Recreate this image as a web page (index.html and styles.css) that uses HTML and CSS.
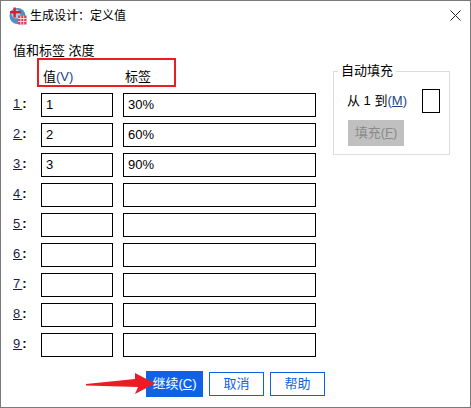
FILE: index.html
```html
<!DOCTYPE html>
<html>
<head>
  <meta name="viewport" content="width=device-width, initial-scale=1.0">
  <title>生成设计：定义值</title>
  <link rel="stylesheet" href="styles.css">
</head>

<body>
  <div class="dialog">
    <div class="titlebar">
      <svg class="app-icon" width="18" height="18" viewBox="0 0 18 18">
        <circle cx="8.500" cy="9" r="8" fill="#4f8fc4"/>
        <circle cx="7" cy="7" r="4.500" fill="#a9cbe6"/>
        <rect x="1" y="4" width="11" height="2.400" fill="#d3202c"/>
        <rect x="4.400" y="0.500" width="2.400" height="10" fill="#d3202c"/>
        <rect x="9" y="8.500" width="8.500" height="9" fill="#d8405a"/>
        <path d="M9 11.500h8.500M9 14.500h8.500M11.800 8.500v9M14.700 8.500v9" stroke="#f6d5da" stroke-width="1"/>
      </svg>
      <span class="title">生成设计：定义值</span>
      <svg class="close" width="11" height="11" viewBox="0 0 11 11">
        <path d="M0.500 0.500l10 10M10.500 0.500l-10 10" stroke="#222" stroke-width="1" fill="none"/>
      </svg>
    </div>

    <div class="content">
      <div class="values">
        <div class="caption">值和标签 浓度</div>
        <div class="head-row">
          <span class="head-value">值<span class="key">(V)</span></span>
          <span>标签</span>
        </div>
        <div class="row"><span class="num"><u>1</u>:</span><div class="field short">1</div><div class="field long">30%</div></div>
        <div class="row"><span class="num"><u>2</u>:</span><div class="field short">2</div><div class="field long">60%</div></div>
        <div class="row"><span class="num"><u>3</u>:</span><div class="field short">3</div><div class="field long">90%</div></div>
        <div class="row"><span class="num"><u>4</u>:</span><div class="field short"></div><div class="field long"></div></div>
        <div class="row"><span class="num"><u>5</u>:</span><div class="field short"></div><div class="field long"></div></div>
        <div class="row"><span class="num"><u>6</u>:</span><div class="field short"></div><div class="field long"></div></div>
        <div class="row"><span class="num"><u>7</u>:</span><div class="field short"></div><div class="field long"></div></div>
        <div class="row"><span class="num"><u>8</u>:</span><div class="field short"></div><div class="field long"></div></div>
        <div class="row"><span class="num"><u>9</u>:</span><div class="field short"></div><div class="field long"></div></div>
      </div>

      <fieldset class="autofill">
        <legend>自动填充</legend>
        <div class="from-row">
          <span>从 1 到<span class="key">(<u>M</u>)</span></span>
          <div class="field tiny"></div>
        </div>
        <div class="fill-button">填充(<u>F</u>)</div>
      </fieldset>
    </div>

    <div class="buttons">
      <div class="btn primary">继续(<u>C</u>)</div>
      <div class="btn">取消</div>
      <div class="btn">帮助</div>
    </div>

    <!-- annotations on top of the screenshot -->
    <div class="mark-box"></div>
    <svg class="mark-arrow" width="69" height="21" viewBox="0 0 69 21">
      <path d="M0 11 L49 6 L49 0 L69 10.500 L49 21 L52 14 L0 12.500 Z" fill="#ec1c24"/>
    </svg>
  </div>
</body>
</html>
```

FILE: styles.css
```css
html, body {
  margin: 0;
  padding: 0;
}

body {
  font-family: "Liberation Sans", "Noto Sans CJK SC", sans-serif;
  font-size: 13px;
  line-height: 16px;
  color: #000;
  background-color: #fff;
}

.dialog {
  position: relative;
  width: 471px;
  height: 408px;
  box-sizing: border-box;
  border: 1px solid #7a7a7a;
  background-color: #fff;
  overflow: hidden;
}

.titlebar {
  display: flex;
  align-items: center;
  height: 29px;
  padding: 0 9px 0 8px;
  margin-bottom: 13px;
}

.app-icon {
  margin-right: 3px;
}

.title {
  flex: 1;
  font-size: 12px;
}

.content {
  display: flex;
  padding-left: 12px;
}

.values {
  width: 320px;
}

.caption {
  height: 16px;
}

.head-row {
  display: flex;
  height: 26px;
  box-sizing: border-box;
  padding: 10px 0 0 30px;
  margin-bottom: 8px;
}

.head-value {
  width: 82px;
}

.key {
  color: #1a4488;
}

.row {
  display: flex;
  align-items: center;
  height: 24px;
  margin-bottom: 6px;
}

.num {
  width: 28px;
  padding-bottom: 2px;
  font-weight: 700;
  letter-spacing: 2px;
}

.num u {
  color: #1c1c50;
  font-weight: 400;
}

.field {
  box-sizing: border-box;
  height: 24px;
  border: 1px solid #000;
  padding: 3px 4px;
  background-color: #fff;
}

.field.short {
  width: 72px;
  margin-right: 10px;
}

.field.long {
  width: 193px;
}

.field.tiny {
  width: 18px;
}

.autofill {
  box-sizing: border-box;
  width: 117px;
  height: 92px;
  margin: 20px 0 0 0;
  padding: 0 9px 0 14px;
  border: 1px solid #dcdcdc;
}

.autofill legend {
  padding: 0 3px;
  margin-left: -10px;
}

.from-row {
  display: flex;
  align-items: center;
  justify-content: space-between;
  margin: 10px 0 0 -1px;
}

.fill-button {
  width: 56px;
  height: 26px;
  margin-top: 7px;
  line-height: 26px;
  text-align: center;
  color: #8a8a8a;
  background-color: #c0c0c0;
}

.buttons {
  display: flex;
  align-items: center;
  gap: 5px;
  padding-left: 145px;
  margin-top: 8px;
}

.btn {
  box-sizing: border-box;
  width: 55px;
  height: 24px;
  line-height: 22px;
  text-align: center;
  color: #0f62e6;
  border: 1px solid #0f62e6;
  background-color: #fff;
}

.btn + .btn {
  margin-left: 1px;
}

.btn.primary {
  width: 57px;
  height: 26px;
  line-height: 26px;
  color: #fff;
  border: none;
  background-color: #0f62e6;
}

.mark-box {
  position: absolute;
  left: 36px;
  top: 57px;
  width: 139px;
  height: 29px;
  box-sizing: border-box;
  border: 2px solid #ec1c24;
}

.mark-arrow {
  position: absolute;
  left: 85px;
  top: 372px;
}
```
